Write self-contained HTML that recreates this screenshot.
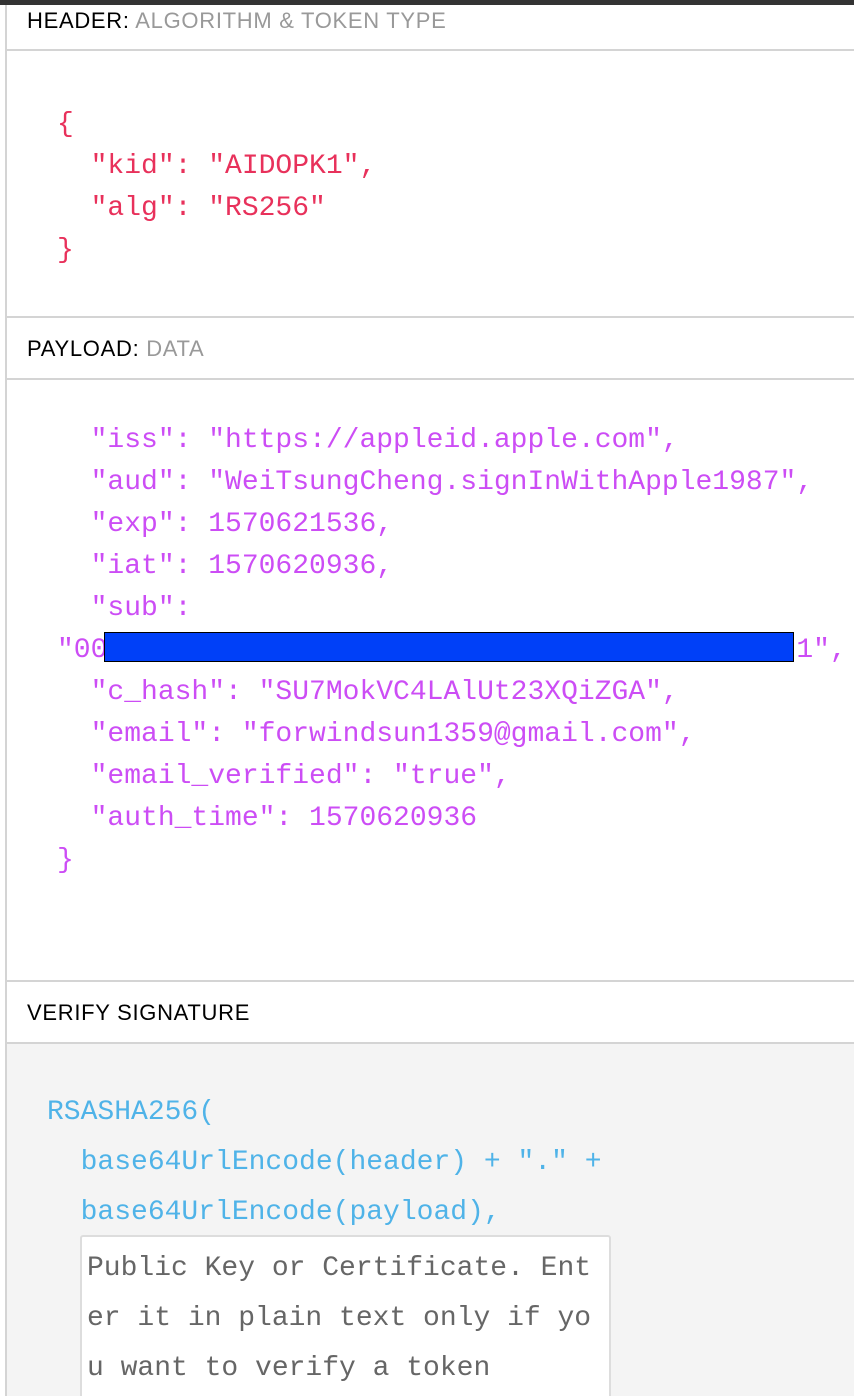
<!DOCTYPE html>
<html><head><meta charset="utf-8"><style>
*{margin:0;padding:0;box-sizing:border-box}
html{width:854px;height:1396px;overflow:hidden}
body{width:854px;height:1396px;background:#fff;position:relative;overflow:hidden;font-family:"Liberation Sans",sans-serif}
.bar{position:absolute;left:0;top:0;width:854px;height:5px;background:#333}
.lb{position:absolute;left:5px;top:5px;width:2px;height:1391px;background:#d4d4d4}
.hl{position:absolute;left:5px;right:0;height:2px;background:#d4d4d4}
.lab{position:absolute;left:27px;font-size:22px;color:#000;letter-spacing:0.7px}
.lab span{color:#999}
.m{position:absolute;font-family:"Liberation Mono",monospace;font-size:28px;white-space:pre;line-height:42px}
.r{color:#e8315b}.p{color:#cc4df5}.b{color:#4fb3e8}
.vbg{position:absolute;left:7px;top:1044px;right:0;bottom:0;background:#f4f4f4}
.ta{position:absolute;left:80px;top:1235px;width:531px;height:170px;background:#fff;border:2px solid #ddd;border-radius:3px}
</style></head><body>
<div class="bar"></div>
<div class="lb"></div>
<div class="lab" style="top:8px">HEADER: <span>ALGORITHM &amp; TOKEN TYPE</span></div>
<div class="hl" style="top:49px"></div>
<div class="m r" style="left:57px;top:104px">{
  "kid": "AIDOPK1",
  "alg": "RS256"
}</div>
<div class="hl" style="top:316px"></div>
<div class="lab" style="top:336px">PAYLOAD: <span>DATA</span></div>
<div class="hl" style="top:378px"></div>
<div class="m p" style="left:57px;top:420px">  "iss": "https://appleid.apple.com",
  "aud": "WeiTsungCheng.signInWithApple1987",
  "exp": 1570621536,
  "iat": 1570620936,
  "sub":
"00                                         1",
  "c_hash": "SU7MokVC4LAlUt23XQiZGA",
  "email": "forwindsun1359@gmail.com",
  "email_verified": "true",
  "auth_time": 1570620936
}</div>
<div style="position:absolute;left:104px;top:632px;width:690px;height:30px;background:#0040f8;border:1px solid #000"></div>
<div class="hl" style="top:980px"></div>
<div class="lab" style="top:1000px">VERIFY SIGNATURE</div>
<div class="vbg"></div>
<div class="hl" style="top:1042px"></div>
<div class="m b" style="left:47px;top:1088px;line-height:50px">RSASHA256(
  base64UrlEncode(header) + "." +
  base64UrlEncode(payload),</div>
<div class="ta"></div>
<div class="m" style="left:87px;top:1244px;line-height:50px;color:#666">Public Key or Certificate. Ent
er it in plain text only if yo
u want to verify a token</div>
</body></html>
